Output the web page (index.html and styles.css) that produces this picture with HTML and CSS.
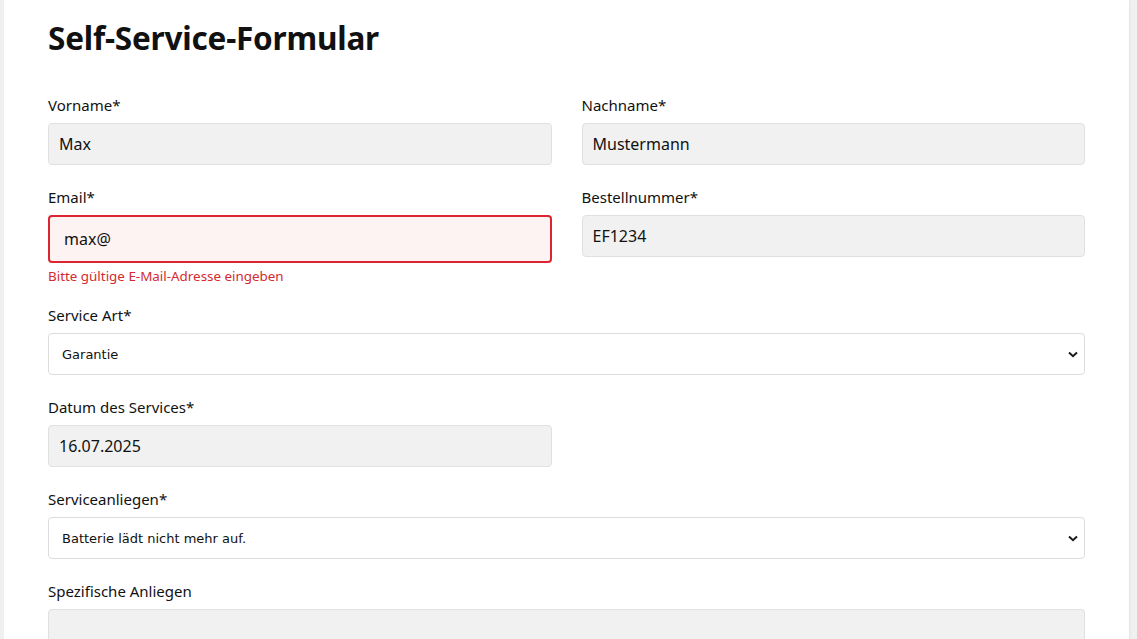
FILE: index.html
```html
<!DOCTYPE html>
<html lang="de">
<head>
  <meta charset="UTF-8">
  <meta name="viewport" content="width=device-width, initial-scale=1.0">
  <title>Self-Service-Formular</title>
  <link rel="stylesheet" href="styles.css">
</head>
<body>
  <main class="container">
    <h1>Self-Service-Formular</h1>

    <form class="service-form">
      <div class="form-row">
        <div class="form-group">
          <label for="vorname">Vorname*</label>
          <input type="text" id="vorname" value="Max">
        </div>
        <div class="form-group">
          <label for="nachname">Nachname*</label>
          <input type="text" id="nachname" value="Mustermann">
        </div>
      </div>

      <div class="form-row">
        <div class="form-group">
          <label for="email">Email*</label>
          <input type="email" id="email" class="invalid" value="max@">
          <div class="error-text">Bitte gültige E-Mail-Adresse eingeben</div>
        </div>
        <div class="form-group">
          <label for="bestellnummer">Bestellnummer*</label>
          <input type="text" id="bestellnummer" value="EF1234">
        </div>
      </div>

      <div class="form-group">
        <label for="serviceArt">Service Art*</label>
        <div class="select-wrap">
          <select id="serviceArt">
            <option>Garantie</option>
            <option>Reparatur</option>
          </select>
          <svg class="chevron" width="10" height="7" viewBox="0 0 10 7"><path d="M1 1.5 L5 5.2 L9 1.5" fill="none" stroke="#1a1a1a" stroke-width="2"/></svg>
        </div>
      </div>

      <div class="form-row">
        <div class="form-group">
          <label for="datum">Datum des Services*</label>
          <input type="text" id="datum" value="16.07.2025">
        </div>
      </div>

      <div class="form-group">
        <label for="anliegen">Serviceanliegen*</label>
        <div class="select-wrap">
          <select id="anliegen">
            <option>Batterie lädt nicht mehr auf.</option>
            <option>Display defekt.</option>
          </select>
          <svg class="chevron" width="10" height="7" viewBox="0 0 10 7"><path d="M1 1.5 L5 5.2 L9 1.5" fill="none" stroke="#1a1a1a" stroke-width="2"/></svg>
        </div>
      </div>

      <div class="form-group">
        <label for="spezifisch">Spezifische Anliegen</label>
        <textarea id="spezifisch" rows="4"></textarea>
      </div>
    </form>
  </main>
</body>
</html>
```

FILE: styles.css
```css
body {
  margin: 0;
  padding: 0;
  background-color: #f0f0f0;
  font-family: "Noto Sans", Arial, sans-serif;
  color: #111;
}

.container {
  background-color: #fff;
  margin: 0 8px 0 4px;
  padding: 20px 44px 40px 44px;
  min-height: 100vh;
  box-shadow: 1px 0 2px rgba(0, 0, 0, 0.06);
}

h1 {
  font-size: 31.5px;
  line-height: 36px;
  font-weight: 700;
  margin: 0 0 39px 0;
  letter-spacing: -0.2px;
}

.form-row {
  display: grid;
  grid-template-columns: 1fr 1fr;
  column-gap: 30px;
}

.form-group {
  display: flex;
  flex-direction: column;
  margin-bottom: 22px;
}

label {
  font-size: 15px;
  line-height: 20px;
  margin-bottom: 8px;
}

input,
textarea {
  box-sizing: border-box;
  height: 42px;
  padding: 0 10px;
  font-family: "Noto Sans", Arial, sans-serif;
  font-size: 16px;
  color: #111;
  background-color: #f1f1f1;
  border: 1px solid #e0e0e0;
  border-radius: 4px;
  outline: none;
}

textarea {
  height: 100px;
  resize: vertical;
}

input.invalid {
  height: 48px;
  padding: 0 14px;
  border: 2px solid #dc2530;
  background-color: #fdf3f2;
}

.error-text {
  color: #d42a2f;
  font-size: 13.4px;
  line-height: 14px;
  margin-top: 6px;
}

.select-wrap {
  position: relative;
}

select {
  box-sizing: border-box;
  width: 100%;
  height: 42px;
  padding: 0 13px;
  font-family: "DejaVu Sans", Verdana, sans-serif;
  font-size: 13px;
  color: #111;
  background-color: #fff;
  border: 1px solid #dcdcdc;
  border-radius: 4px;
  appearance: none;
  -webkit-appearance: none;
  outline: none;
}

.chevron {
  position: absolute;
  right: 7px;
  top: 18px;
  pointer-events: none;
}
```
